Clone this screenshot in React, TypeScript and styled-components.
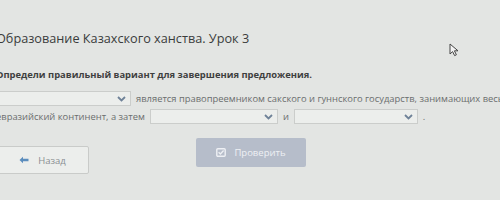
import React from 'react';
import styled, { createGlobalStyle } from 'styled-components';

const GlobalStyle = createGlobalStyle`
  html, body {
    margin: 0;
    padding: 0;
    background: #e3e5e3;
    overflow: hidden;
  }
  body {
    font-family: "Open Sans", "Noto Sans", sans-serif;
    color: #555;
  }
`;

const Page = styled.div`
  width: 500px;
  height: 200px;
  position: relative;
  overflow: hidden;
  padding: 28px 0 0 0;
  box-sizing: border-box;
`;

const Content = styled.div`
  margin-left: -4px;
  display: flex;
  flex-direction: column;
`;

const Title = styled.h1`
  margin: 0;
  font-size: 12.7px;
  font-weight: 400;
  color: #3a3c3c;
  white-space: nowrap;
  line-height: 20px;
`;

const Prompt = styled.div`
  margin-top: 20px;
  font-size: 9.4px;
  font-weight: 700;
  color: #3e4040;
  white-space: nowrap;
  line-height: 14px;
`;

const Sentence = styled.div`
  margin-top: 9px;
  display: flex;
  flex-direction: column;
  gap: 3px;
`;

const Line = styled.div<{ $shift?: number }>`
  display: flex;
  align-items: center;
  gap: 5px;
  white-space: nowrap;
  font-size: 9.4px;
  color: #6b6e6e;
  height: 15px;
  margin-left: ${(p) => p.$shift ?? 0}px;
`;

const Select = styled.div<{ $w: number }>`
  width: ${(p) => p.$w}px;
  height: 15px;
  flex-shrink: 0;
  box-sizing: border-box;
  border: 1px solid #cbcdcb;
  background: #eceeec;
  display: flex;
  align-items: center;
  justify-content: flex-end;
  padding-right: 4px;
`;

const Actions = styled.div`
  margin-top: 14px;
  display: flex;
  align-items: flex-start;
  gap: 107px;
`;

const BackButton = styled.button`
  width: 93px;
  height: 28px;
  margin-top: 8px;
  background: #eceeec;
  border: 1px solid #c9cbc9;
  border-radius: 2px;
  display: flex;
  align-items: center;
  justify-content: center;
  gap: 9px;
  font-family: "Open Sans", sans-serif;
  font-size: 9.5px;
  color: #8a8e92;
  padding: 0;
`;

const CheckButton = styled.button`
  width: 110px;
  height: 29px;
  background: #b6bdca;
  border: none;
  border-radius: 2px;
  display: flex;
  align-items: center;
  justify-content: center;
  gap: 8px;
  font-family: "Open Sans", sans-serif;
  font-size: 9.5px;
  color: #eef0f4;
  padding: 0;
`;

const Cursor = styled.svg`
  position: absolute;
  left: 449px;
  top: 43px;
`;

const Chevron = () => (
  <svg width="9" height="6" viewBox="0 0 9 6">
    <path d="M1 1 L4.5 4.5 L8 1" fill="none" stroke="#6f8298" strokeWidth="1.8" />
  </svg>
);

export default function App() {
  return (
    <>
      <GlobalStyle />
      <Page>
        <Content>
          <Title>Образование Казахского ханства. Урок 3</Title>
          <Prompt>Определи правильный вариант для завершения предложения.</Prompt>
          <Sentence>
            <Line $shift={-20}>
              <Select $w={155}>
                <Chevron />
              </Select>
              <span>является правопреемником сакского и гуннского государств, занимающих весь</span>
            </Line>
            <Line>
              <span>евразийский континент, а затем</span>
              <Select $w={128}>
                <Chevron />
              </Select>
              <span>и</span>
              <Select $w={124}>
                <Chevron />
              </Select>
              <span>.</span>
            </Line>
          </Sentence>
          <Actions>
            <BackButton>
              <svg width="10" height="8" viewBox="0 0 10 8">
                <path d="M0.5 4 L4 0.8 L4 2.8 L9.5 2.8 L9.5 5.2 L4 5.2 L4 7.2 Z" fill="#5b8dbd" />
              </svg>
              Назад
            </BackButton>
            <CheckButton>
              <svg width="10" height="9" viewBox="0 0 10 9">
                <rect x="0.8" y="0.8" width="8.4" height="7.4" rx="1" fill="none" stroke="#eef0f4" strokeWidth="1.4" />
                <path d="M2.6 4.2 L4.4 6 L7.6 2.6" fill="none" stroke="#eef0f4" strokeWidth="1.4" />
              </svg>
              Проверить
            </CheckButton>
          </Actions>
        </Content>
        <Cursor width="12" height="14" viewBox="0 0 12 14">
          <path d="M1 1 L1 11 L3.6 8.6 L5.6 12.6 L7.4 11.8 L5.4 7.8 L9 7.8 Z" fill="#f4f4f4" stroke="#444" strokeWidth="1" />
        </Cursor>
      </Page>
    </>
  );
}
